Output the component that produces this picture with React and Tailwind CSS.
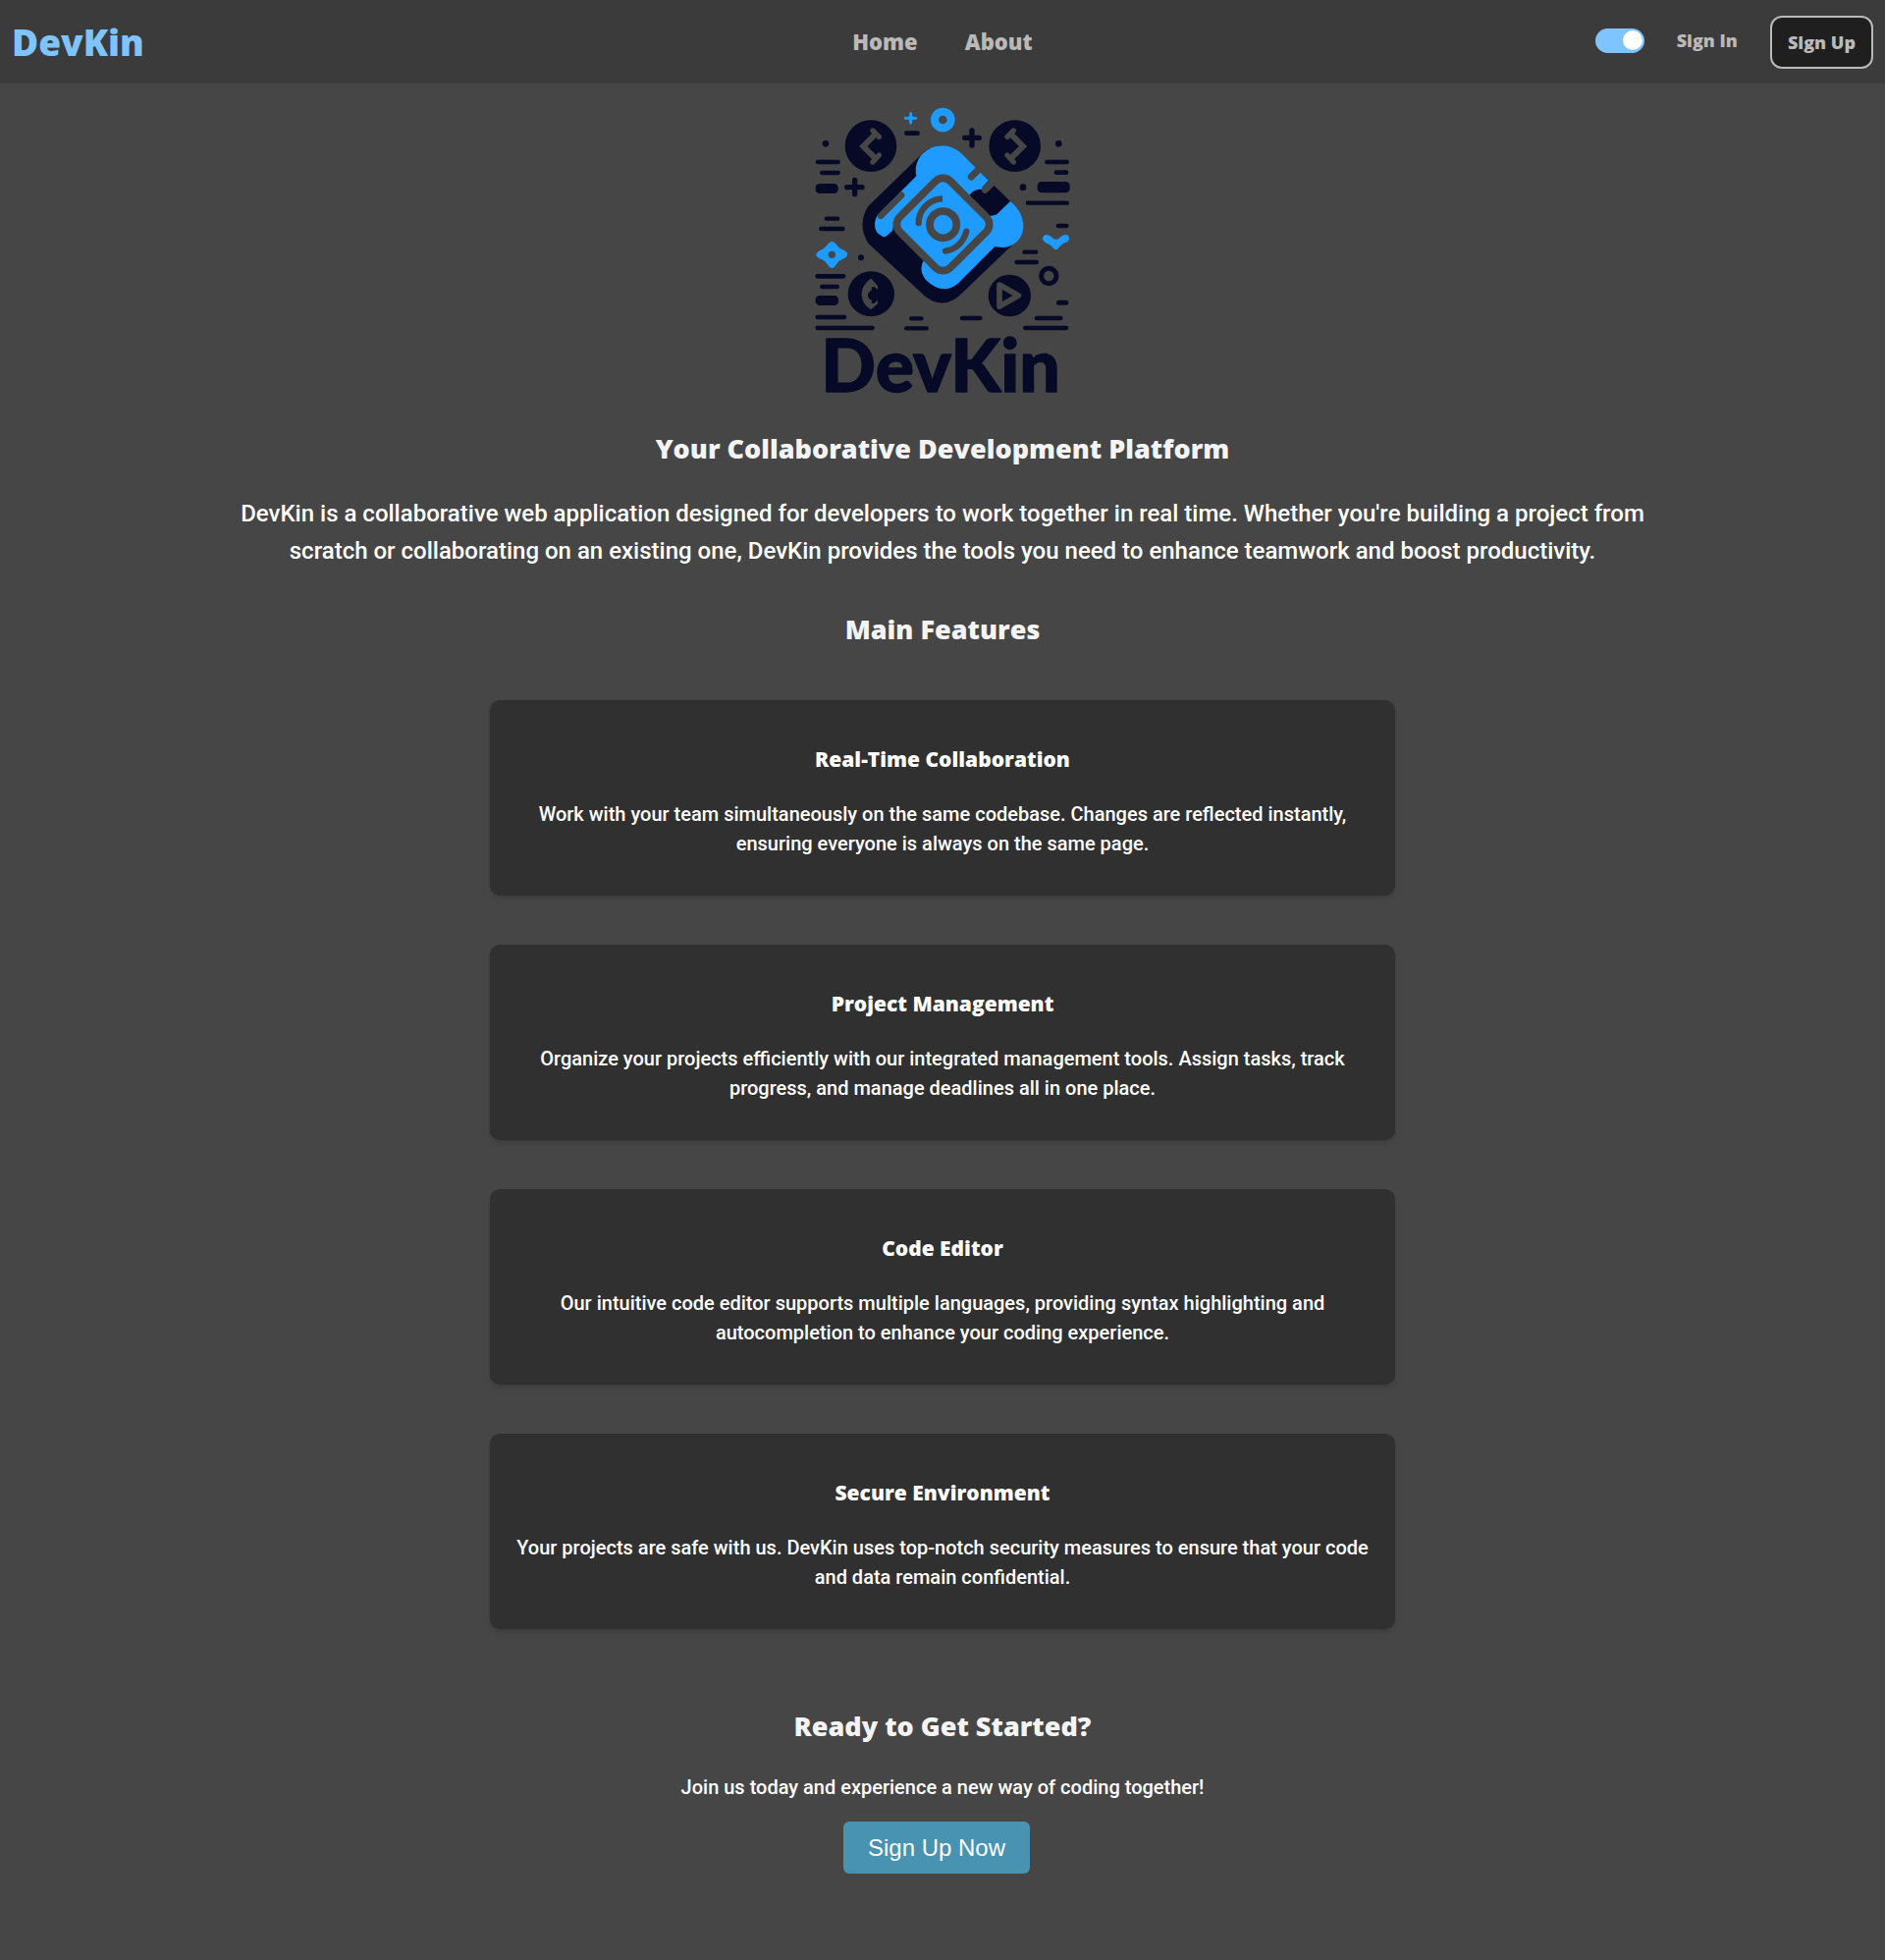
import { useState } from "react";

const NAVY = "#060a26";
const BLUE = "#1f9bff";
const BASE = "#464646";

const features = [
  {
    title: "Real-Time Collaboration",
    text: "Work with your team simultaneously on the same codebase. Changes are reflected instantly, ensuring everyone is always on the same page.",
  },
  {
    title: "Project Management",
    text: "Organize your projects efficiently with our integrated management tools. Assign tasks, track progress, and manage deadlines all in one place.",
  },
  {
    title: "Code Editor",
    text: "Our intuitive code editor supports multiple languages, providing syntax highlighting and autocompletion to enhance your coding experience.",
  },
  {
    title: "Secure Environment",
    text: "Your projects are safe with us. DevKin uses top-notch security measures to ensure that your code and data remain confidential.",
  },
];

// Horizontal dashes around the emblem: x start, x end, y, thickness
const dashes = [
  [303, 351, 107, 14],
  [32, 108, 195, 13],
  [45, 108, 228, 13],
  [32, 101, 276, 30],
  [59, 106, 368, 13],
  [42, 122, 399, 13],
  [732, 807, 195, 13],
  [761, 805, 227, 14],
  [710, 809, 272, 34],
  [674, 807, 320, 13],
  [767, 806, 390, 14],
  [664, 712, 470, 13],
  [640, 714, 501, 13],
  [31, 124, 544, 14],
  [45, 105, 576, 13],
  [32, 102, 618, 30],
  [31, 127, 669, 13],
  [31, 213, 702, 13],
  [318, 362, 673, 13],
  [303, 378, 703, 13],
  [473, 542, 672, 13],
  [701, 788, 672, 13],
  [666, 805, 702, 13],
  [768, 805, 625, 15],
];

function Logo() {
  return (
    <svg viewBox="0 0 840 960" className="h-[320px] w-[280px]" role="img" aria-label="DevKin">
      {dashes.map(([a, b, y, h]) => (
        <rect key={`${a}-${y}`} x={a} y={y - h / 2} width={b - a} height={h} rx={Math.min(h / 2, 13)} fill={NAVY} />
      ))}
      <g fill={NAVY}>
        <circle cx="63" cy="139" r="10" />
        <circle cx="775" cy="139" r="10" />
        <circle cx="666" cy="272" r="10" />
        <circle cx="171" cy="487" r="9" />
        <circle cx="201" cy="146" r="79" />
        <circle cx="641" cy="146" r="79" />
        <ellipse cx="202" cy="598" rx="71" ry="69" />
        <ellipse cx="625" cy="603" rx="65" ry="64" />
      </g>

      <g stroke={NAVY} strokeWidth="16" strokeLinecap="round">
        <path d="M510 99V144M488 121H532" />
        <path d="M152 250V293M128 272H174" />
      </g>

      {/* Code brackets */}
      <g fill="none" stroke={BASE} strokeLinejoin="miter" strokeLinecap="round">
        <path d="M212 113L178 147L212 181" strokeWidth="18" />
        <path d="M207 99L226 118M207 195L226 174" strokeWidth="16" />
        <path d="M632 113L666 147L632 181" strokeWidth="18" />
        <path d="M637 99L618 118M637 195L618 174" strokeWidth="16" />
      </g>

      {/* Lower left and lower right badges */}
      <path
        d="M202 551L222 573V585L211 576L203 578L204 586Q192 593 192 603Q192 612 204 618L203 626L211 627L222 617V628L202 646C182 634 173 617 173 599C173 580 183 563 202 551Z"
        fill={BASE}
      />
      <path d="M594 570L652 603L594 636Z" fill={NAVY} stroke={BASE} strokeWidth="17" strokeLinejoin="round" />

      {/* Small blue ornaments */}
      <circle cx="421" cy="66" r="25" fill="none" stroke={BLUE} strokeWidth="24" />
      <path d="M323 46V76M306 61H339" stroke={BLUE} strokeWidth="8" strokeLinecap="round" />
      <path d="M323 49L335 61L323 73L311 61Z" fill={BLUE} />
      <path
        d="M82 438Q90 438 97 449Q103 458 118 464Q130 468 129 479Q127 487 115 491Q104 495 96 507Q89 519 82 519Q75 519 68 507Q60 495 48 491Q35 487 34 479Q35 469 48 464Q60 458 67 449Q75 438 82 438Z"
        fill={BLUE}
      />
      <circle cx="82" cy="478" r="11" fill={BASE} />
      <path
        d="M738 417Q747 417 755 425Q766 438 779 425Q787 417 796 417Q807 418 807 429Q806 439 793 442Q784 445 776 456Q766 470 757 456Q749 446 738 443Q727 439 726 429Q727 418 738 417Z"
        fill={BLUE}
      />
      <circle cx="745" cy="543" r="23" fill="none" stroke={NAVY} strokeWidth="15" />

      {/* Emblem */}
      <path
        d="M365 163Q421 125 476 167L642 330Q690 387 642 440L476 599Q421 650 365 604L193 443Q158 387 193 330Z"
        fill={NAVY}
      />
      <path
        d="M340 238C330 185 370 145 421 145C450 145 474 163 490 181L561 251L541 273Q548 284 540 279Q517 275 501 298L421 238L270 390L267 405L249 421Q243 426 236 422Q212 411 213 384Q214 366 226 352L290 288Z"
        fill={BLUE}
      />
      <path
        d="M627 315C678 355 676 415 645 440Q618 463 580 453L467 566Q420 605 369 555Q345 525 363 494L420 520L563 386L560 359Q580 361 590 351Z"
        fill={BLUE}
      />
      <g stroke={BASE} strokeLinecap="round">
        <path d="M295 296L231 360" strokeWidth="19" />
        <path d="M535 213L508 240" strokeWidth="21" />
        <path d="M575 255L550 280" strokeWidth="21" />
      </g>

      <rect
        x="312"
        y="276"
        width="219"
        height="219"
        rx="32"
        transform="rotate(45 421.500 385.500)"
        fill={BLUE}
        stroke={BASE}
        strokeWidth="23"
      />
      <circle cx="422" cy="386" r="41" fill={BLUE} stroke={BASE} strokeWidth="23" />
      <g fill="none" stroke={BASE} strokeWidth="19">
        <path d="M420 307A76 76 0 0 0 350 360" />
        <path d="M350 360Q347 370 347 381" strokeLinecap="round" />
        <path d="M493 407A78 78 0 0 1 429 467" strokeLinecap="round" />
      </g>

      <text
        x="49"
        y="898"
        fill={NAVY}
        stroke={NAVY}
        strokeWidth="4"
        strokeLinejoin="round"
        fontFamily="Lato, sans-serif"
        fontWeight="900"
        fontSize="220"
      >
        DevKin
      </text>
    </svg>
  );
}

function Navbar() {
  const [dark, setDark] = useState(true);
  return (
    <header className="grid h-[85px] grid-cols-[1fr_auto_1fr] items-center bg-[#3b3b3b] px-3 font-['Open_Sans',sans-serif] font-extrabold text-[#b9b9b9]">
      <a href="#" className="justify-self-start text-[37px] text-[#7fc4ff]">
        DevKin
      </a>
      <nav className="flex gap-12 text-[22px]">
        <a href="#home">Home</a>
        <a href="#about">About</a>
      </nav>
      <div className="flex items-center justify-self-end text-lg">
        <div className="mr-[33px] flex items-center gap-[33px] pb-[3px]">
          <label className="flex cursor-pointer">
            <input
              type="checkbox"
              aria-label="Dark mode"
              checked={dark}
              onChange={(e) => setDark(e.target.checked)}
              className="peer sr-only"
            />
            <span className="flex h-[25px] w-[50px] items-center rounded-full bg-[#b9b9b9] px-0.5 peer-checked:justify-end peer-checked:bg-[#7fc4ff]">
              <span className="size-5 rounded-full bg-white" />
            </span>
          </label>
          <a href="#signin">Sign In</a>
        </div>
        <a
          href="#signup"
          className="flex h-[54px] items-center rounded-xl border-2 border-[#b9b9b9] bg-[#1f1f1f] px-4"
        >
          Sign Up
        </a>
      </div>
    </header>
  );
}

function SectionTitle({ as: Tag = "h2", className, children }) {
  return (
    <Tag
      className={`${className} font-['Open_Sans',sans-serif] text-[27px] leading-[45px] font-extrabold text-[#f4f4f4]`}
    >
      {children}
    </Tag>
  );
}

export default function App() {
  return (
    <div className="min-h-screen bg-[#464646] font-[Roboto,sans-serif] font-medium text-white">
      <Navbar />
      <main className="flex flex-col items-center pt-[15px] pb-[88px] text-center">
        <Logo />
        <SectionTitle as="h1" className="mt-3.5">
          Your Collaborative Development Platform
        </SectionTitle>
        <p className="mt-[25px] w-[77%] text-2xl leading-[38px]">
          DevKin is a collaborative web application designed for developers to work together in real time. Whether
          you're building a project from scratch or collaborating on an existing one, DevKin provides the tools you
          need to enhance teamwork and boost productivity.
        </p>
        <SectionTitle className="mt-[38px]">Main Features</SectionTitle>
        <section className="mt-[50px] flex w-[48%] flex-col gap-[50px]">
          {features.map((f) => (
            <article key={f.title} className="rounded-[10px] bg-[#303030] px-6 pt-11 pb-[38px] shadow-md">
              <h3 className="font-['Open_Sans',sans-serif] text-[21px] leading-8 font-extrabold">{f.title}</h3>
              <p className="mt-[25px] text-xl leading-[30px]">{f.text}</p>
            </article>
          ))}
        </section>
        <SectionTitle className="mt-[76px]">Ready to Get Started?</SectionTitle>
        <p className="mt-[25px] text-xl leading-[30px]">Join us today and experience a new way of coding together!</p>
        <button
          type="button"
          className="mt-5 mr-3 h-[53px] rounded-md bg-[#4793b1] px-[25px] font-['Liberation_Sans',sans-serif] text-2xl font-normal"
        >
          Sign Up Now
        </button>
      </main>
    </div>
  );
}
